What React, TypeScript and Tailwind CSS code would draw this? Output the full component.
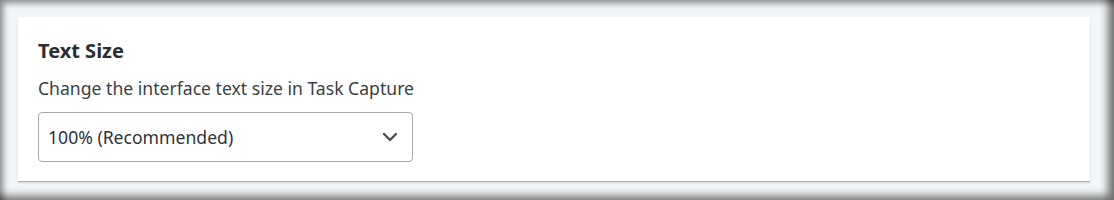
export default function App() {
  return (
    <div
      className="w-[1114px] h-[200px] bg-[#f3f6f8] pt-[17px] pl-[18px] pr-[24px] shadow-[inset_-12px_-10px_8px_-6px_rgba(0,0,0,0.55),inset_6px_6px_6px_-3px_rgba(0,0,0,0.45)]"
      style={{ fontFamily: '"Noto Sans", "Open Sans", sans-serif' }}
    >
      <div className="w-[1072px] h-[165px] bg-white border-b border-[#a9adb0] shadow-[0_1px_2px_rgba(0,0,0,0.15)] px-5 pt-[20px]">
        <h2 className="text-[20px] font-bold text-[#2b2f33] leading-[28px]">Text Size</h2>
        <p className="mt-[11px] text-[17.6px] text-[#3a3f44] leading-[24px]">
          Change the interface text size in Task Capture
        </p>
        <button
          type="button"
          className="mt-[12px] w-[375px] h-[50px] rounded-[4px] border border-[#a6a9ac] bg-white pl-[9px] pr-[14px] flex items-center justify-between text-[17.6px] text-[#2f3337]"
        >
          <span>100% (Recommended)</span>
          <svg width="16" height="10" viewBox="0 0 16 10" fill="none">
            <path d="M2 2l6 6 6-6" stroke="#4a4e52" strokeWidth="2.4" strokeLinecap="round" strokeLinejoin="round" />
          </svg>
        </button>
      </div>
    </div>
  );
}
